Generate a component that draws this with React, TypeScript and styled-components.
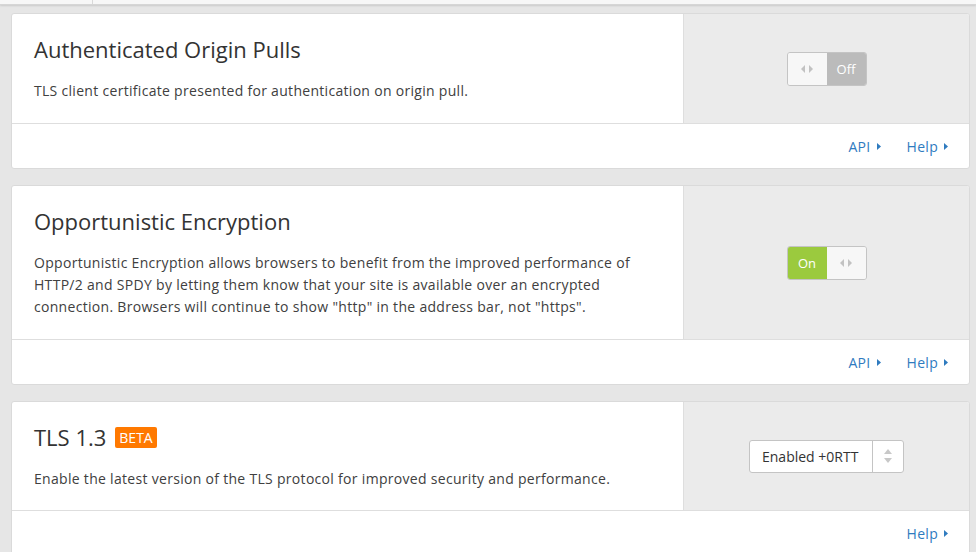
import React from 'react';
import styled, { createGlobalStyle } from 'styled-components';

const GlobalStyle = createGlobalStyle`
  html, body {
    margin: 0;
    padding: 0;
    background: #e6e6e6;
    font-family: "Open Sans", "Liberation Sans", sans-serif;
    color: #333;
  }
  * { box-sizing: border-box; }
`;

const Page = styled.div`
  width: 976px;
  height: 552px;
  overflow: hidden;
  background: #e6e6e6;
`;

const TabStrip = styled.div`
  height: 5px;
  background: #f7f7f7;
  display: flex;
  border-bottom: 1px solid #d6d6d6;
  box-shadow: 0 1px 2px rgba(0, 0, 0, 0.12);
`;

const TabEdge = styled.div`
  width: 93px;
  border-right: 1px solid #d9d9d9;
`;

const List = styled.div`
  display: flex;
  flex-direction: column;
  gap: 16px;
  padding: 8px 6px 0 11px;
`;

const Card = styled.section`
  background: #fff;
  border: 1px solid #dadada;
  border-radius: 3px;
  overflow: hidden;
`;

const Main = styled.div<{ $h: number }>`
  display: flex;
  height: ${(p) => p.$h}px;
  border-bottom: 1px solid #dedede;
`;

const Info = styled.div`
  flex: 1;
  padding: 20px 36px 0 22px;
`;

const Title = styled.h3`
  margin: 0;
  font-size: 22px;
  font-weight: 400;
  line-height: 30px;
  color: #333;
  display: flex;
  align-items: center;
  gap: 9px;
`;

const Badge = styled.span`
  background: #ff7900;
  color: #fff;
  font-size: 14px;
  line-height: 21px;
  padding: 0 4px;
  border-radius: 2px;
  margin-top: 1px;
`;

const Desc = styled.p`
  margin: 16px 0 0;
  font-size: 14px;
  line-height: 22px;
  letter-spacing: 0.3px;
  color: #404040;
`;

const Control = styled.div`
  width: 286px;
  background: #ebebeb;
  border-left: 1px solid #dedede;
  display: flex;
  align-items: center;
  justify-content: center;
`;

const Toggle = styled.div`
  display: flex;
  width: 80px;
  height: 34px;
  border: 1px solid #c4c4c4;
  border-radius: 3px;
  overflow: hidden;
`;

const Half = styled.div<{ $bg: string }>`
  flex: 1;
  display: flex;
  align-items: center;
  justify-content: center;
  background: ${(p) => p.$bg};
  color: #fff;
  font-size: 13px;
`;

const Select = styled.div`
  display: flex;
  width: 155px;
  height: 33px;
  background: #fff;
  border: 1px solid #c4c4c4;
  border-radius: 3px;
  font-size: 14px;
  color: #333;
`;

const SelectValue = styled.div`
  flex: 1;
  display: flex;
  align-items: center;
  padding-left: 12px;
  border-right: 1px solid #c4c4c4;
`;

const SelectArrow = styled.div`
  width: 30px;
  display: flex;
  align-items: center;
  justify-content: center;
`;

const Footer = styled.div`
  height: 44px;
  display: flex;
  align-items: center;
  justify-content: flex-end;
  gap: 26px;
  padding-right: 21px;
`;

const Link = styled.a`
  color: #2f7bbf;
  font-size: 14px;
  letter-spacing: 0.3px;
  text-decoration: none;
  display: flex;
  align-items: center;
  gap: 6px;
`;

const Caret = () => (
  <svg width="4" height="7" viewBox="0 0 4 7">
    <path d="M0 0 L4 3.5 L0 7 Z" fill="#2f7bbf" />
  </svg>
);

const Arrows = () => (
  <svg width="12" height="8" viewBox="0 0 12 8">
    <path d="M4 0 L0 4 L4 8 Z" fill="#c2c2c2" />
    <path d="M8 0 L12 4 L8 8 Z" fill="#c2c2c2" />
  </svg>
);

const UpDown = () => (
  <svg width="8" height="14" viewBox="0 0 8 14">
    <path d="M4 0 L8 5 L0 5 Z" fill="#c8c8c8" />
    <path d="M0 9 L8 9 L4 14 Z" fill="#c8c8c8" />
  </svg>
);

const Links = ({ api }: { api: boolean }) => (
  <Footer>
    {api && (
      <Link href="#">
        API <Caret />
      </Link>
    )}
    <Link href="#">
      Help <Caret />
    </Link>
  </Footer>
);

export default function App() {
  return (
    <Page>
      <GlobalStyle />
      <TabStrip>
        <TabEdge />
      </TabStrip>
      <List>
        <Card>
          <Main $h={110}>
            <Info>
              <Title>Authenticated Origin Pulls</Title>
              <Desc>TLS client certificate presented for authentication on origin pull.</Desc>
            </Info>
            <Control>
              <Toggle>
                <Half $bg="#f7f7f7">
                  <Arrows />
                </Half>
                <Half $bg="#bbbbbb">Off</Half>
              </Toggle>
            </Control>
          </Main>
          <Links api />
        </Card>

        <Card>
          <Main $h={154}>
            <Info>
              <Title>Opportunistic Encryption</Title>
              <Desc>
                Opportunistic Encryption allows browsers to benefit from the improved performance of
                HTTP/2 and SPDY by letting them know that your site is available over an encrypted
                connection. Browsers will continue to show "http" in the address bar, not "https".
              </Desc>
            </Info>
            <Control>
              <Toggle>
                <Half $bg="#9bca3e">On</Half>
                <Half $bg="#f7f7f7">
                  <Arrows />
                </Half>
              </Toggle>
            </Control>
          </Main>
          <Links api />
        </Card>

        <Card>
          <Main $h={109}>
            <Info>
              <Title>
                TLS 1.3 <Badge>BETA</Badge>
              </Title>
              <Desc>Enable the latest version of the TLS protocol for improved security and performance.</Desc>
            </Info>
            <Control>
              <Select>
                <SelectValue>Enabled +0RTT</SelectValue>
                <SelectArrow>
                  <UpDown />
                </SelectArrow>
              </Select>
            </Control>
          </Main>
          <Links api={false} />
        </Card>
      </List>
    </Page>
  );
}
